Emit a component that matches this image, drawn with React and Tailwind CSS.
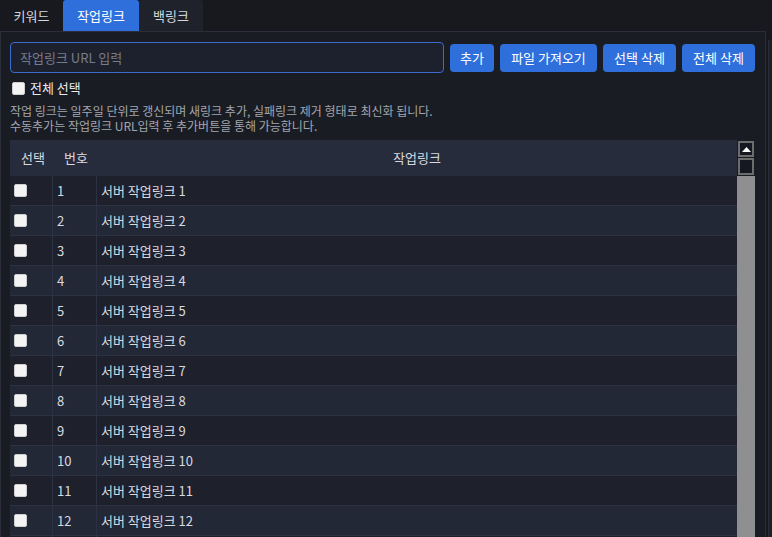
import React from "react";

const font = { fontFamily: '"Noto Sans CJK KR", "Noto Sans", sans-serif' };

const rows = Array.from({ length: 14 }, (_, i) => i + 1);

const Check = () => (
  <span className="inline-block w-[13px] h-[13px] rounded-[2px] bg-[#f4f4f4] border border-[#cfcfcf]" />
);

const App = () => {
  return (
    <div
      className="w-[772px] h-[537px] overflow-hidden bg-[#17191f] text-[#d7dae0] flex"
      style={font}
    >
      <div className="w-[766px] flex flex-col">
        {/* Tabs */}
        <div className="flex h-[31px] items-end text-[13px]">
          <div className="w-[63px] h-[31px] flex items-center justify-center text-[#d4d7dd]">
            키워드
          </div>
          <div className="w-[76px] h-[31px] flex items-center justify-center bg-[#2f6fdc] text-white rounded-t-[3px]">
            작업링크
          </div>
          <div className="w-[64px] h-[31px] flex items-center justify-center bg-[#1f222a] text-[#d4d7dd] rounded-t-[3px]">
            백링크
          </div>
        </div>

        {/* Panel */}
        <div className="flex-1 border border-[#2a2e38] border-b-0 bg-[#1a1c23] flex flex-col px-[9px] pt-[10px]">
          {/* Input row */}
          <div className="flex items-center gap-[6px] h-[31px]">
            <div className="w-[434px] h-[31px] rounded-[4px] border border-[#3d6acb] bg-[#1d212d] flex items-center px-[9px] text-[13px] text-[#767c89]">
              작업링크 URL 입력
            </div>
            <button className="w-[44px] h-[28px] rounded-[4px] bg-[#2f6fdc] text-white text-[13px]">
              추가
            </button>
            <button className="w-[97px] h-[28px] rounded-[4px] bg-[#2f6fdc] text-white text-[13px]">
              파일 가져오기
            </button>
            <button className="w-[73px] h-[28px] rounded-[4px] bg-[#2f6fdc] text-white text-[13px]">
              선택 삭제
            </button>
            <button className="w-[73px] h-[28px] rounded-[4px] bg-[#2f6fdc] text-white text-[13px]">
              전체 삭제
            </button>
          </div>

          {/* Select all */}
          <div className="flex items-center gap-[5px] mt-[6px] h-[18px] pl-[2px] text-[13px] text-[#e6e8ec]">
            <Check />
            <span>전체 선택</span>
          </div>

          {/* Description */}
          <div className="mt-[6px] text-[12px] leading-[15px] text-[#a2a6b0]">
            <p>작업 링크는 일주일 단위로 갱신되며 새링크 추가, 실패링크 제거 형태로 최신화 됩니다.</p>
            <p>수동추가는 작업링크 URL입력 후 추가버튼을 통해 가능합니다.</p>
          </div>

          {/* Table */}
          <div className="flex mt-[7px]">
            <div className="w-[727px] flex flex-col text-[13px]">
              <div className="flex h-[36px] items-center bg-[#272c3c] text-[#d7dae0]">
                <div className="w-[43px] pl-[11px]">선택</div>
                <div className="w-[44px] pl-[11px]">번호</div>
                <div className="flex-1 text-center">작업링크</div>
              </div>
              {rows.map((n) => (
                <div
                  key={n}
                  className={`flex h-[30px] border-b border-[#2c3243] ${
                    n % 2 === 1 ? "bg-[#1e212b]" : "bg-[#232837]"
                  }`}
                >
                  <div className="w-[43px] flex items-center pl-[4px] border-r border-[#2c3243]">
                    <Check />
                  </div>
                  <div className="w-[44px] flex items-center pl-[4px] border-r border-[#2c3243]">
                    {n}
                  </div>
                  <div className="flex-1 flex items-center pl-[4px]">
                    서버 작업링크 {n}
                  </div>
                </div>
              ))}
            </div>

            {/* Scrollbar */}
            <div className="w-[18px] flex flex-col bg-[#8f8f91]">
              <div className="bg-[#1a1c23] pt-[1px] px-[1px] pb-[1px] flex flex-col gap-[1px]">
                <div className="h-[16px] border-2 border-[#6d6d6d] bg-[#151820] flex items-center justify-center">
                  <svg width="9" height="5" viewBox="0 0 9 5">
                    <path d="M4.5 0 L9 5 L0 5 Z" fill="#ffffff" />
                  </svg>
                </div>
                <div className="h-[17px] border-2 border-[#6d6d6d] bg-[#151820]" />
              </div>
            </div>
          </div>
        </div>
      </div>
      <div className="w-[2px]" />
      <div className="flex-1 mt-[40px] border-l border-[#2a2e38] bg-[#1d2027]" />
    </div>
  );
};

export default App;
